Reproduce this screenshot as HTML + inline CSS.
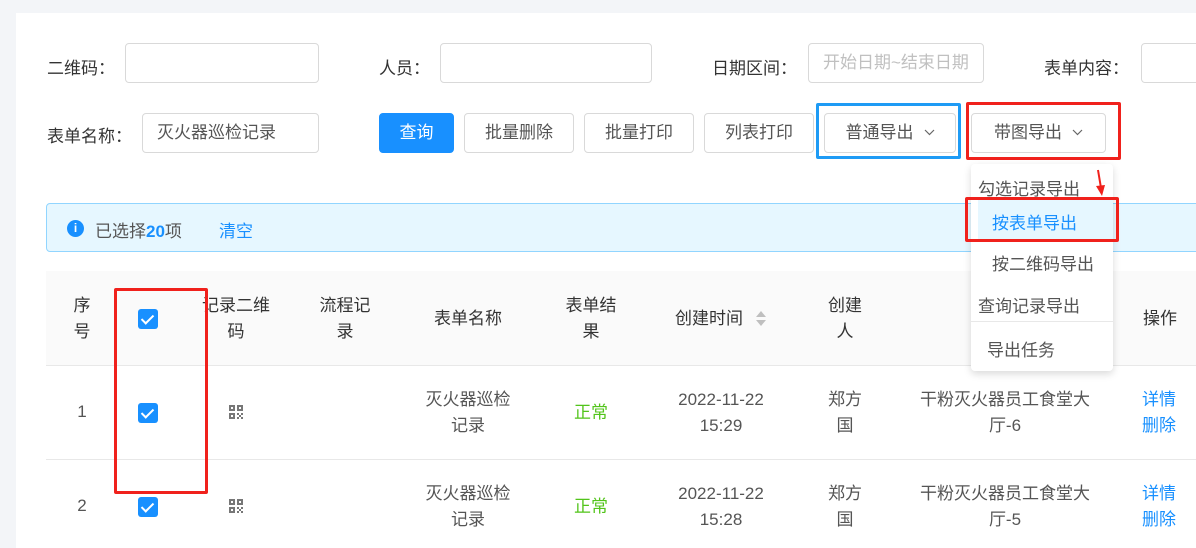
<!DOCTYPE html>
<html><head><meta charset="utf-8"><style>
*{box-sizing:border-box;margin:0;padding:0}
body{width:1196px;height:548px;overflow:hidden;background:#f3f5f8;font-family:"Liberation Sans","Noto Sans CJK SC",sans-serif;font-size:17px;color:#333;position:relative}
.card{position:absolute;left:16px;top:13px;width:1180px;height:535px;background:#fff}
.a{position:absolute;white-space:nowrap}
.in{position:absolute;border:1px solid #d9d9d9;border-radius:4px;background:#fff;height:40px}
.btn{position:absolute;top:113px;height:40px;border:1px solid #d9d9d9;border-radius:4px;background:#fff;text-align:center;line-height:38px;color:#555}
.c{position:absolute;text-align:center;line-height:26px;transform:translateX(-50%);white-space:nowrap}
.cb{position:absolute;width:20px;height:20px;background:#1890ff;border-radius:3px}
.cb:after{content:"";position:absolute;left:6px;top:3px;width:5px;height:10px;border:solid #fff;border-width:0 2px 2px 0;transform:rotate(45deg)}
.qr{position:absolute;width:16px;height:16px}
.g{color:#555}
.chev{display:inline-block;vertical-align:middle;margin-left:10px;margin-top:-3px}
</style></head><body>
<div class="card"></div>
<div class="a" style="left:47px;top:54px">二维码：</div>
<div class="in" style="left:125px;top:43px;width:194px"></div>
<div class="a" style="left:379px;top:54px">人员：</div>
<div class="in" style="left:440px;top:43px;width:212px"></div>
<div class="a" style="left:712px;top:54px">日期区间：</div>
<div class="in" style="left:808px;top:43px;width:176px;color:#c0c0c0;padding-left:14px;line-height:38px">开始日期~结束日期</div>
<div class="a" style="left:1044px;top:54px">表单内容：</div>
<div class="in" style="left:1141px;top:43px;width:70px"></div>

<div class="a" style="left:47px;top:122px">表单名称：</div>
<div class="in" style="left:142px;top:113px;width:177px;padding-left:14px;line-height:38px;color:#555">灭火器巡检记录</div>
<div class="btn" style="left:379px;width:75px;background:#1890ff;border-color:#1890ff;color:#fff">查询</div>
<div class="btn" style="left:464px;width:110px">批量删除</div>
<div class="btn" style="left:584px;width:110px">批量打印</div>
<div class="btn" style="left:704px;width:110px">列表打印</div>
<div class="btn" style="left:824px;width:132px">普通导出<svg class="chev" width="11" height="7" viewBox="0 0 11 7"><path d="M1 1l4.5 4.5L10 1" fill="none" stroke="#666" stroke-width="1.2"/></svg></div>
<div class="btn" style="left:971px;width:135px">带图导出<svg class="chev" width="11" height="7" viewBox="0 0 11 7"><path d="M1 1l4.5 4.5L10 1" fill="none" stroke="#666" stroke-width="1.2"/></svg></div>
<div class="a" style="left:816px;top:103px;width:145px;height:56px;border:3px solid #1e9bf5;border-radius:2px"></div>
<div class="a" style="left:966px;top:102px;width:155px;height:58px;border:3px solid #f0211c;border-radius:2px"></div>

<div class="a" style="left:46px;top:203px;width:1160px;height:49px;background:#e6f7ff;border:1px solid #91d5ff;border-radius:4px"></div>
<div class="a" style="left:67px;top:220px;width:17px;height:17px;border-radius:50%;background:#1890ff;color:#fff;font-size:12px;font-weight:bold;text-align:center;line-height:17px">i</div>
<div class="a g" style="left:95px;top:217px">已选择<b style="color:#1890ff">20</b>项</div>
<div class="a" style="left:219px;top:217px;color:#1890ff">清空</div>

<div class="a" style="left:46px;top:271px;width:1150px;height:95px;background:#fafafa;border-bottom:1px solid #e8e8e8"></div>
<div class="a" style="left:46px;top:459px;width:1150px;height:1px;background:#e8e8e8"></div>
<div class="c" style="left:82px;top:293px">序<br>号</div>
<div class="cb" style="left:138px;top:309px"></div>
<div class="c" style="left:236px;top:293px">记录二维<br>码</div>
<div class="c" style="left:345px;top:293px">流程记<br>录</div>
<div class="c" style="left:468px;top:306px">表单名称</div>
<div class="c" style="left:591px;top:293px">表单结<br>果</div>
<div class="c" style="left:709px;top:306px">创建时间</div>
<div class="a" style="left:756px;top:311px;width:0;height:0;border:5px solid transparent;border-bottom:6px solid #bfbfbf;border-top:0"></div>
<div class="a" style="left:756px;top:320px;width:0;height:0;border:5px solid transparent;border-top:6px solid #bfbfbf;border-bottom:0"></div>
<div class="c" style="left:845px;top:293px">创建<br>人</div>
<div class="c" style="left:1005px;top:306px">所在位置</div>
<div class="c" style="left:1160px;top:306px">操作</div>

<div class="c g" style="left:82px;top:399px">1</div>
<div class="cb" style="left:138px;top:403px"></div>
<svg class="qr" style="left:228px;top:404px" viewBox="0 0 16 16" fill="#777"><path d="M1 1h6v6H1zM3 3v2h2V3zM9 1h6v6H9zM11 3v2h2V3zM1 9h6v6H1zM3 11v2h2v-2zM9 9h2v2H9zM13 9h2v2h-2zM11 11h2v2h-2zM9 13h2v2H9zM13 13h2v2h-2z" fill-rule="evenodd"/></svg>
<div class="c g" style="left:468px;top:387px">灭火器巡检<br>记录</div>
<div class="c" style="left:591px;top:400px;color:#52c41a">正常</div>
<div class="c g" style="left:721px;top:387px">2022-11-22<br>15:29</div>
<div class="c g" style="left:845px;top:387px">郑方<br>国</div>
<div class="c g" style="left:1005px;top:387px">干粉灭火器员工食堂大<br>厅-6</div>
<div class="a" style="left:1142px;top:387px;color:#1890ff;line-height:26px">详情<br>删除</div>

<div class="c g" style="left:82px;top:493px">2</div>
<div class="cb" style="left:138px;top:497px"></div>
<svg class="qr" style="left:228px;top:498px" viewBox="0 0 16 16" fill="#777"><path d="M1 1h6v6H1zM3 3v2h2V3zM9 1h6v6H9zM11 3v2h2V3zM1 9h6v6H1zM3 11v2h2v-2zM9 9h2v2H9zM13 9h2v2h-2zM11 11h2v2h-2zM9 13h2v2H9zM13 13h2v2h-2z" fill-rule="evenodd"/></svg>
<div class="c g" style="left:468px;top:481px">灭火器巡检<br>记录</div>
<div class="c" style="left:591px;top:494px;color:#52c41a">正常</div>
<div class="c g" style="left:721px;top:481px">2022-11-22<br>15:28</div>
<div class="c g" style="left:845px;top:481px">郑方<br>国</div>
<div class="c g" style="left:1005px;top:481px">干粉灭火器员工食堂大<br>厅-5</div>
<div class="a" style="left:1142px;top:481px;color:#1890ff;line-height:26px">详情<br>删除</div>

<div class="a" style="left:114px;top:288px;width:94px;height:206px;border:3px solid #f0211c;border-radius:2px"></div>

<div class="a" style="left:971px;top:164px;width:142px;height:207px;background:#fff;border-radius:4px;box-shadow:0 3px 8px rgba(0,0,0,.15)"></div>
<div class="a" style="left:978px;top:175px;color:#555">勾选记录导出</div>
<div class="a" style="left:978px;top:200px;width:135px;height:40px;background:#e6f7ff"></div>
<div class="a" style="left:992px;top:209px;color:#1890ff">按表单导出</div>
<div class="a" style="left:992px;top:250px;color:#555">按二维码导出</div>
<div class="a" style="left:978px;top:292px;color:#555">查询记录导出</div>
<div class="a" style="left:971px;top:321px;width:142px;height:1px;background:#e8e8e8"></div>
<div class="a" style="left:987px;top:336px;color:#555">导出任务</div>
<div class="a" style="left:965px;top:197px;width:154px;height:45px;border:3px solid #f0211c;border-radius:2px"></div>
<svg class="a" style="left:1092px;top:168px" width="16" height="30" viewBox="0 0 16 30"><path d="M6 2 L9 20" stroke="#f0211c" stroke-width="2"/><path d="M4 18 L10 28 L13 17 Z" fill="#f0211c"/></svg>
</body></html>
